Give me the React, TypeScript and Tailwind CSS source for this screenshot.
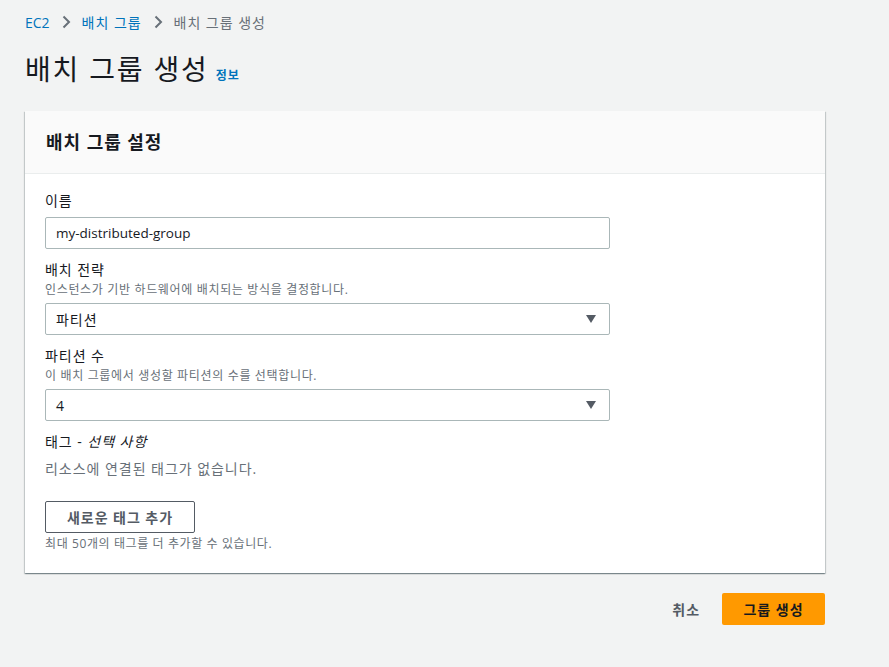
import React from 'react';

const FONT = { fontFamily: '"Open Sans", "Noto Sans CJK KR", sans-serif' };

function Chevron() {
  return (
    <svg width="16" height="16" viewBox="0 0 16 16" className="mx-[8px]">
      <path d="M5.5 2.5 L11 8 L5.5 13.5" fill="none" stroke="#687078" strokeWidth="2" />
    </svg>
  );
}

function Caret() {
  return (
    <svg width="12" height="10" viewBox="0 0 12 10">
      <path d="M1 1 H11 L6 9 Z" fill="#545b64" />
    </svg>
  );
}

function SelectBox({ value }: { value: string }) {
  return (
    <div className="mt-[6px] flex h-[32px] w-[565px] items-center justify-between rounded-[2px] border border-[#aab7b8] bg-white pl-[10px] pr-[12px] text-[14px] text-[#16191f]">
      <span>{value}</span>
      <Caret />
    </div>
  );
}

export default function App() {
  return (
    <div className="min-h-[667px] bg-[#f2f3f3] px-[25px] pt-[12px] tracking-[0.06em]" style={FONT}>
      {/* Breadcrumbs */}
      <nav className="flex h-[20px] items-center text-[14px]">
        <span className="tracking-normal text-[#0073bb]">EC2</span>
        <Chevron />
        <span className="text-[#0073bb]">배치 그룹</span>
        <Chevron />
        <span className="text-[#687078]">배치 그룹 생성</span>
      </nav>

      {/* Title */}
      <div className="mt-[15px] flex items-baseline">
        <h1 className="text-[28px] leading-[44px] tracking-[0.065em] text-[#16191f]">배치 그룹 생성</h1>
        <span className="ml-[7px] text-[12px] font-bold text-[#0073bb]">정보</span>
      </div>

      {/* Card */}
      <div className="mt-[20px] w-[800px] bg-white shadow-[0_1px_1px_0_rgba(0,28,36,0.3),1px_1px_1px_0_rgba(0,28,36,0.15),-1px_1px_1px_0_rgba(0,28,36,0.15)]">
        <div className="flex h-[63px] items-center border-b border-[#eaeded] bg-[#fafafa] px-[21px]">
          <h2 className="text-[18px] font-bold text-[#16191f]">배치 그룹 설정</h2>
        </div>

        <div className="px-[20px] pb-[21px] pt-[16px] text-[#16191f]">
          <div>
            <label className="block text-[14px] leading-[22px]">이름</label>
            <div className="mt-[5px] flex h-[32px] w-[565px] items-center rounded-[2px] border border-[#aab7b8] bg-white px-[10px] text-[13.5px] tracking-normal">
              my-distributed-group
            </div>
          </div>

          <div className="mt-[10px]">
            <label className="block text-[14px] leading-[22px]">배치 전략</label>
            <p className="mt-[2px] text-[12px] leading-[14px] tracking-[0.055em] text-[#687078]">
              인스턴스가 기반 하드웨어에 배치되는 방식을 결정합니다.
            </p>
            <SelectBox value="파티션" />
          </div>

          <div className="mt-[10px]">
            <label className="block text-[14px] leading-[22px]">파티션 수</label>
            <p className="mt-[2px] text-[12px] leading-[14px] tracking-[0.055em] text-[#687078]">
              이 배치 그룹에서 생성할 파티션의 수를 선택합니다.
            </p>
            <SelectBox value="4" />
          </div>

          <div className="mt-[10px]">
            <label className="block text-[14px] leading-[22px]">
              태그 - <i>선택 사항</i>
            </label>
            <p className="mt-[5px] text-[14px] leading-[22px] text-[#687078]">리소스에 연결된 태그가 없습니다.</p>
            <button
              type="button"
              className="mt-[21px] flex h-[32px] w-[150px] items-center justify-center rounded-[2px] border border-[#545b64] bg-white text-[14px] font-bold text-[#545b64]"
            >
              새로운 태그 추가
            </button>
            <p className="mt-[3px] text-[12px] leading-[16px] tracking-[0.05em] text-[#687078]">
              최대 50개의 태그를 더 추가할 수 있습니다.
            </p>
          </div>
        </div>
      </div>

      {/* Footer actions */}
      <div className="mt-[20px] flex w-[800px] items-center justify-end">
        <span className="mr-[22px] text-[14px] font-bold text-[#545b64]">취소</span>
        <button
          type="button"
          className="flex h-[32px] w-[103px] items-center justify-center rounded-[2px] bg-[#ff9900] text-[14px] font-bold text-[#16191f]"
        >
          그룹 생성
        </button>
      </div>
    </div>
  );
}
